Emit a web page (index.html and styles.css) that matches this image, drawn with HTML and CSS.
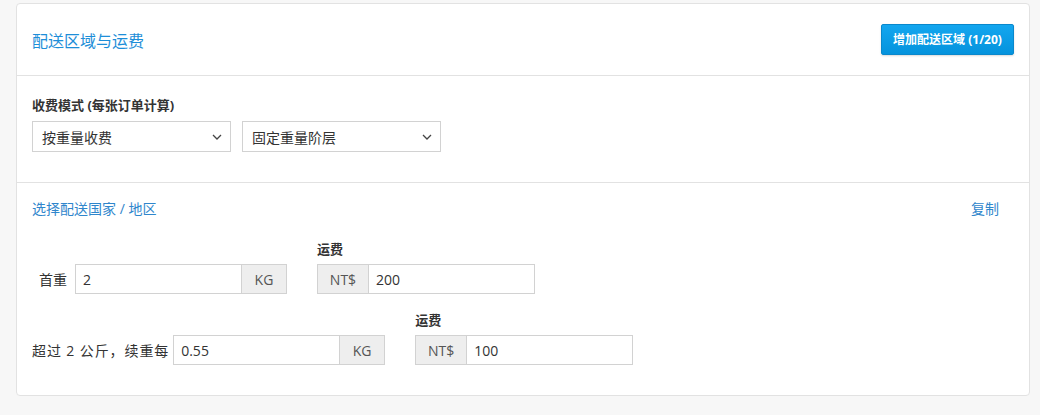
FILE: index.html
```html
<!DOCTYPE html>
<html lang="zh-CN">
<head>
  <meta charset="UTF-8">
  <title>配送区域与运费</title>
  <link rel="stylesheet" href="styles.css">
</head>
<body class="page">
  <div class="card">
    <div class="card__header">
      <h2 class="card__title">配送区域与运费</h2>
      <button class="btn btn--primary" type="button">增加配送区域 (1/20)</button>
    </div>

    <div class="card__section card__section--mode">
      <div class="field-label">收费模式 (每张订单计算)</div>
      <div class="select-row">
        <div class="select">
          <span>按重量收费</span>
          <svg class="select__arrow" width="10" height="6" viewBox="0 0 10 6"><path d="M1 1l4 4 4-4" fill="none" stroke="#444" stroke-width="1.3"/></svg>
        </div>
        <div class="select">
          <span>固定重量阶层</span>
          <svg class="select__arrow" width="10" height="6" viewBox="0 0 10 6"><path d="M1 1l4 4 4-4" fill="none" stroke="#444" stroke-width="1.3"/></svg>
        </div>
      </div>
    </div>

    <div class="card__section card__section--zone">
      <div class="zone__top">
        <a class="link" href="#">选择配送国家 / 地区</a>
        <a class="link" href="#">复制</a>
      </div>

      <div class="rate-row">
        <div class="rate-row__weight">
          <span class="rate-row__label rate-row__label--first">首重</span>
          <div class="input-group">
            <input class="input-group__input" type="text" value="2">
            <span class="input-group__addon input-group__addon--kg">KG</span>
          </div>
        </div>
        <div class="rate-row__price">
          <div class="field-label">运费</div>
          <div class="input-group">
            <span class="input-group__addon input-group__addon--cur">NT$</span>
            <input class="input-group__input" type="text" value="200">
          </div>
        </div>
      </div>

      <div class="rate-row">
        <div class="rate-row__weight">
          <span class="rate-row__label rate-row__label--extra">超过 2 公斤，续重每</span>
          <div class="input-group">
            <input class="input-group__input" type="text" value="0.55">
            <span class="input-group__addon input-group__addon--kg">KG</span>
          </div>
        </div>
        <div class="rate-row__price">
          <div class="field-label">运费</div>
          <div class="input-group">
            <span class="input-group__addon input-group__addon--cur">NT$</span>
            <input class="input-group__input" type="text" value="100">
          </div>
        </div>
      </div>
    </div>
  </div>
</body>
</html>
```

FILE: styles.css
```css
*, *::before, *::after {
  box-sizing: border-box;
}

.page {
  margin: 0;
  background: #f7f7f7;
  font-family: "Open Sans", "Noto Sans CJK SC", sans-serif;
  font-size: 14px;
  color: #333;
}

.card {
  margin: 3px 10px 0 16px;
  background: #fff;
  border: 1px solid #e2e2e2;
  border-radius: 4px;
}

.card__header {
  height: 72px;
  padding: 0 15px;
  display: flex;
  align-items: center;
  justify-content: space-between;
  border-bottom: 1px solid #e2e2e2;
}

.card__title {
  margin: 0;
  font-size: 16px;
  font-weight: normal;
  color: #1d8ed8;
}

.btn {
  font-family: inherit;
  cursor: pointer;
}

.btn--primary {
  height: 31px;
  width: 133px;
  padding: 0;
  margin-top: -1px;
  border: 1px solid #0a88cc;
  border-radius: 2px;
  background: linear-gradient(#13a6ef, #0593dd);
  box-shadow: 0 1px 2px rgba(0, 0, 0, 0.15);
  color: #fff;
  font-size: 12px;
  font-weight: bold;
}

.card__section {
  padding: 0 15px;
}

.card__section--mode {
  padding-top: 19px;
  padding-bottom: 30px;
  border-bottom: 1px solid #e2e2e2;
}

.field-label {
  font-size: 13px;
  font-weight: bold;
  line-height: 20px;
}

.card__section--mode .field-label {
  margin-bottom: 6px;
}

.select-row {
  display: flex;
  gap: 11px;
}

.select {
  width: 199px;
  height: 31px;
  padding: 0 8px 0 9px;
  border: 1px solid #d2d2d2;
  display: flex;
  align-items: center;
  justify-content: space-between;
}

.card__section--zone {
  padding-top: 16px;
  padding-bottom: 30px;
}

.zone__top {
  display: flex;
  justify-content: space-between;
  padding-right: 15px;
  line-height: 20px;
}

.link {
  color: #2f86cc;
  text-decoration: none;
}

.rate-row {
  display: flex;
  align-items: flex-end;
  gap: 30px;
  margin-top: 20px;
}

.rate-row + .rate-row {
  margin-top: 16px;
}

.rate-row__weight {
  display: flex;
  align-items: center;
}

.rate-row__label {
  margin-right: 4px;
}

.rate-row__label--first {
  margin-left: 7px;
  margin-right: 8px;
}

.rate-row__label--extra {
  letter-spacing: 0.9px;
}

.rate-row__price .field-label {
  margin-bottom: 5px;
}

.input-group {
  display: flex;
  height: 30px;
}

.input-group__input {
  width: 167px;
  height: 30px;
  margin: 0;
  padding: 0 7px;
  border: 1px solid #d2d2d2;
  font-family: inherit;
  font-size: 14px;
  color: #333;
  outline: none;
}

.input-group__addon {
  height: 30px;
  display: flex;
  align-items: center;
  justify-content: center;
  background: #eee;
  border: 1px solid #d2d2d2;
  color: #555;
}

.input-group__addon--kg {
  width: 45px;
  border-left: 0;
}

.input-group__addon--cur {
  width: 51px;
  border-right: 0;
}
```
